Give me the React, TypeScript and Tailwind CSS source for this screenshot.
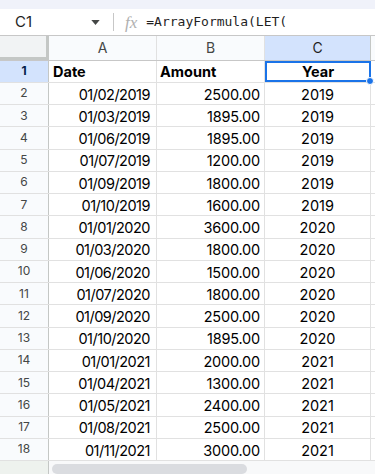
import React from "react";

type Row = {
  date: string;
  amount: string;
  year: string;
};

const rows: Array<Row> = [
  { date: "01/02/2019", amount: "2500.00", year: "2019" },
  { date: "01/03/2019", amount: "1895.00", year: "2019" },
  { date: "01/06/2019", amount: "1895.00", year: "2019" },
  { date: "01/07/2019", amount: "1200.00", year: "2019" },
  { date: "01/09/2019", amount: "1800.00", year: "2019" },
  { date: "01/10/2019", amount: "1600.00", year: "2019" },
  { date: "01/01/2020", amount: "3600.00", year: "2020" },
  { date: "01/03/2020", amount: "1800.00", year: "2020" },
  { date: "01/06/2020", amount: "1500.00", year: "2020" },
  { date: "01/07/2020", amount: "1800.00", year: "2020" },
  { date: "01/09/2020", amount: "2500.00", year: "2020" },
  { date: "01/10/2020", amount: "1895.00", year: "2020" },
  { date: "01/01/2021", amount: "2000.00", year: "2021" },
  { date: "01/04/2021", amount: "1300.00", year: "2021" },
  { date: "01/05/2021", amount: "2400.00", year: "2021" },
  { date: "01/08/2021", amount: "2500.00", year: "2021" },
  { date: "01/11/2021", amount: "3000.00", year: "2021" },
];

function FormulaBar() {
  return (
    <div className="h-[29px] flex items-center border-b border-[#c7c7c7] bg-white">
      <div className="w-[113px] flex items-center pl-[15px] pr-[13px]">
        <span className="text-[15px] text-[#1f1f1f]">C1</span>
        <svg viewBox="0 0 10 6" className="ml-auto w-[9px] h-[5px]">
          <polygon points="0,0 10,0 5,6" fill="#444746" />
        </svg>
      </div>
      <div className="w-px h-[18px] bg-[#c7c7c7]" />
      <span className="ml-[11px] text-[17px] italic text-[#b0b0b0] [font-family:'Liberation_Serif',serif] leading-none">
        fx
      </span>
      <span className="ml-[9px] text-[13px] text-[#1f1f1f] [font-family:'DejaVu_Sans_Mono',monospace]">
        =ArrayFormula(LET(
      </span>
    </div>
  );
}

function HeaderRow() {
  const colClass =
    "h-full flex items-center justify-center border-r border-[#e1e1e1] text-[14px] text-[#444746]";
  return (
    <div className="h-[25px] flex border-b border-[#c7c7c7] bg-[#f9fbfd]">
      <div className="w-[49px] h-full pr-[3px] pb-[3px] bg-[#c4c7c5]">
        <div className="w-full h-full bg-[#f1f3f4]" />
      </div>
      <div className={`${colClass} w-[108px]`}>A</div>
      <div className={`${colClass} w-[108px]`}>B</div>
      <div className="w-[106px] h-full flex items-center justify-center border-r border-[#c4c7c5] bg-[#d3e3fd] text-[14px] text-[#1f1f1f]">
        C
      </div>
      <div className="flex-1" />
    </div>
  );
}

function App() {
  const cellClass =
    "h-full flex items-center pt-[2px] border-r border-[#e1e1e1] text-[14.5px] text-[#000]";
  return (
    <div className="w-[375px] h-[474px] overflow-hidden bg-white flex flex-col [font-family:Inter,'Liberation_Sans',sans-serif]">
      <div className="h-[9px] bg-[#f0f2fa]" />
      <FormulaBar />
      <HeaderRow />

      <div className="h-[22.25px] flex border-b border-[#e1e1e1]">
        <div className="w-[49px] h-full flex items-center justify-center bg-[#d3e3fd] border-r border-[#c4c7c5] text-[12px] font-bold text-[#041e49]">
          1
        </div>
        <div className={`${cellClass} w-[108px] pl-[4px] font-bold`}>Date</div>
        <div className={`${cellClass} w-[108px] pl-[3px] font-bold`}>Amount</div>
        <div className="relative w-[106px] h-full flex items-center justify-center pt-[2px] border-2 border-[#1a73e8] text-[14.5px] font-bold text-[#000]">
          Year
          <span className="absolute -right-[5px] -bottom-[5px] w-[8px] h-[8px] rounded-full bg-[#1a73e8] border border-white" />
        </div>
        <div className="flex-1" />
      </div>

      {rows.map((row, index) => (
        <div key={`row-${index}`} className="h-[22.25px] flex border-b border-[#e1e1e1]">
          <div className="w-[49px] h-full flex items-center justify-center bg-[#f9fbfd] border-r border-[#c4c7c5] text-[12px] text-[#444746]">
            {index + 2}
          </div>
          <div className={`${cellClass} w-[108px] justify-end pr-[6px] tracking-[-0.5px]`}>
            {row.date}
          </div>
          <div className={`${cellClass} w-[108px] justify-end pr-[4px] tracking-[-0.2px]`}>
            {row.amount}
          </div>
          <div className={`${cellClass} w-[106px] justify-center`}>{row.year}</div>
          <div className="flex-1" />
        </div>
      ))}

      <div className="flex-1 flex bg-[#f8f9fa]">
        <div className="w-[49px] h-full bg-[#eef2ee] border-r border-[#c4c7c5]" />
        <div className="pl-[3px] pt-[3px]">
          <div className="w-[195px] h-[10px] rounded-[5px] bg-[#dadce0]" />
        </div>
      </div>
    </div>
  );
}

export default App;
